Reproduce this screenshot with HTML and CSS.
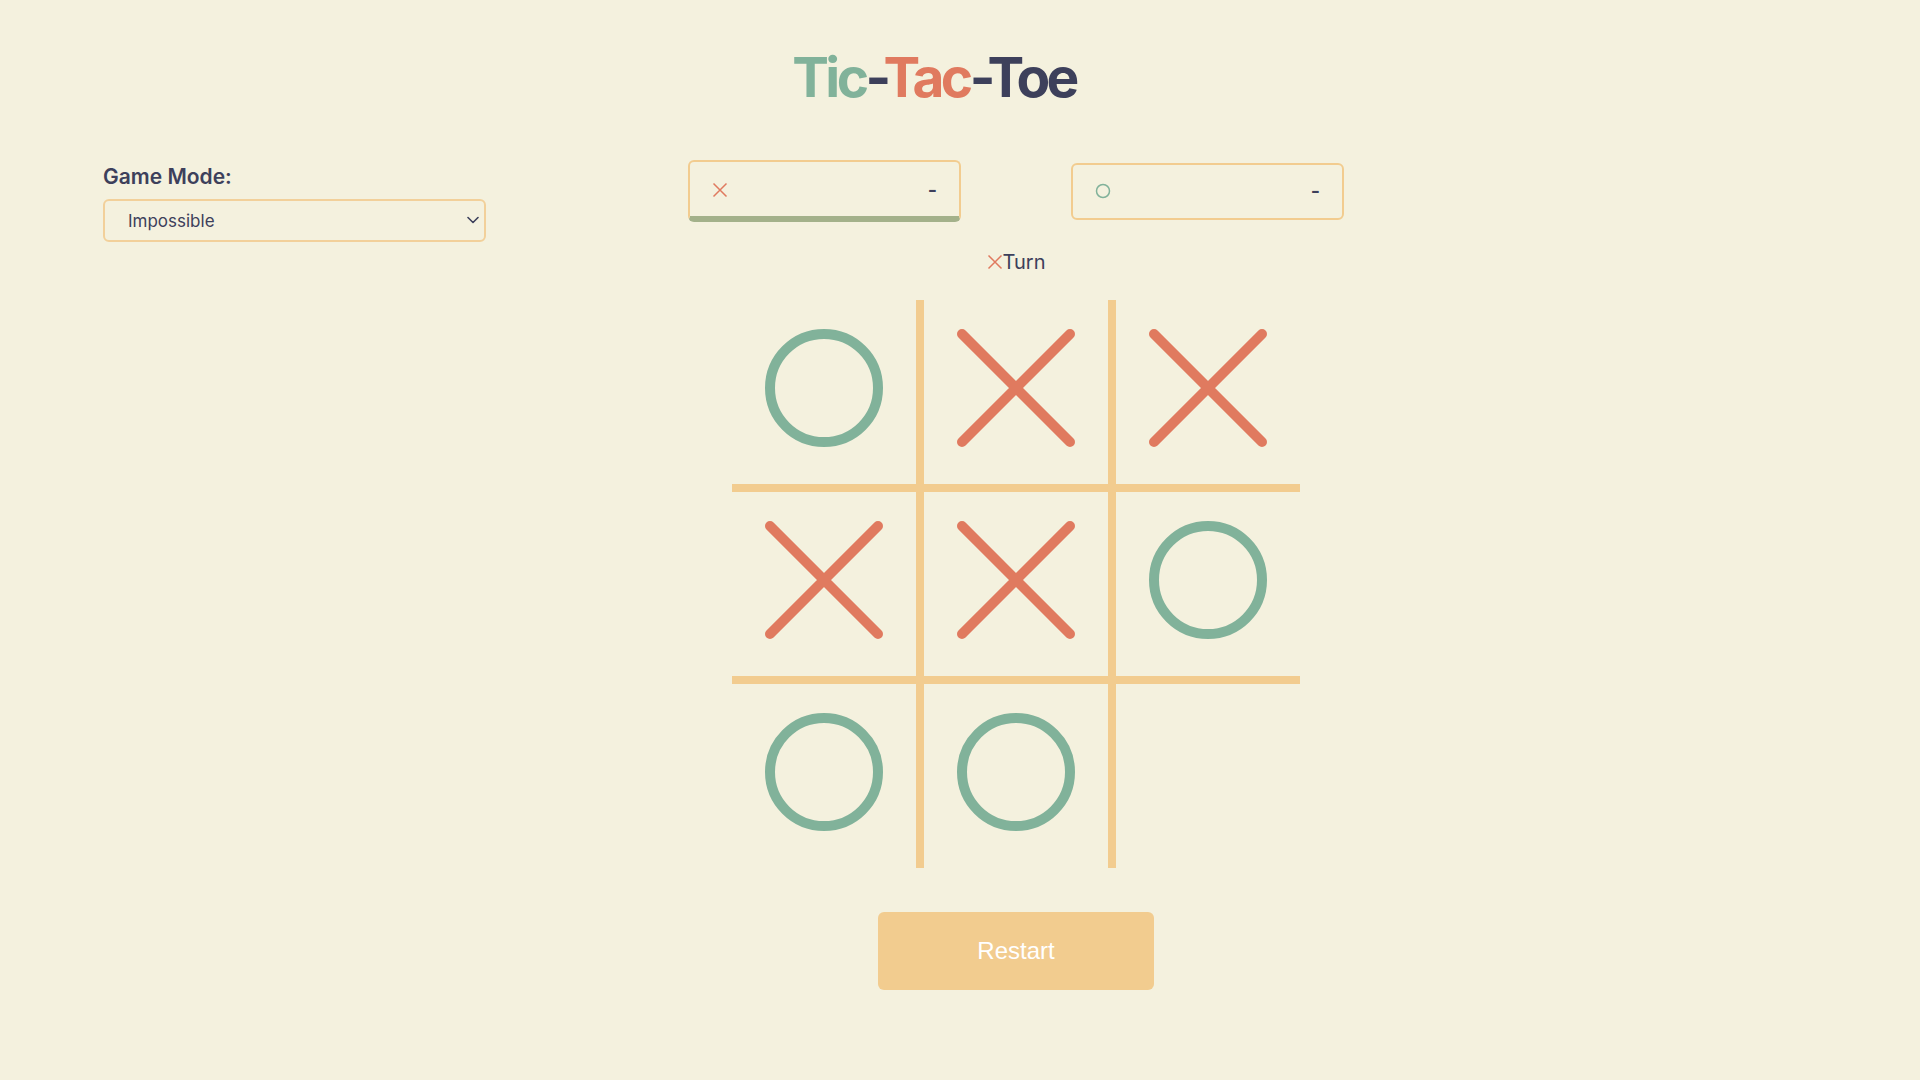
FILE: index.html
```html
<!DOCTYPE html>
<html lang="en">
<head>
<meta charset="utf-8">
<title>Tic-Tac-Toe</title>
<link rel="stylesheet" href="styles.css">
</head>
<body>
<div class="page">
  <h1 class="title"><span class="t-green">Tic</span><span class="t-navy">-</span><span class="t-coral">Tac</span><span class="t-navy">-Toe</span></h1>
  <div class="layout">
    <aside class="sidebar">
      <label class="mode-label" for="mode">Game Mode:</label>
      <div class="select-wrap">
        <select id="mode" class="mode-select">
          <option>Easy</option>
          <option>Medium</option>
          <option>Hard</option>
          <option selected>Impossible</option>
        </select>
        <svg class="chevron" viewBox="0 0 12 8" width="12" height="8"><path d="M1 1.5 L6 6.5 L11 1.5" fill="none" stroke="#3d405b" stroke-width="1.6" stroke-linecap="round" stroke-linejoin="round"/></svg>
      </div>
    </aside>
    <main class="game">
      <div class="players">
        <div class="player-card active">
          <svg class="icon" viewBox="0 0 16 16" width="16" height="16"><path d="M1.5 1.5 L14.5 14.5 M14.5 1.5 L1.5 14.5" stroke="#e07a5f" stroke-width="1.5" fill="none"/></svg>
          <span class="score">-</span>
        </div>
        <div class="player-card">
          <svg class="icon" viewBox="0 0 16 16" width="16" height="16"><circle cx="8" cy="8" r="6.5" stroke="#81b29a" stroke-width="1.5" fill="none"/></svg>
          <span class="score">-</span>
        </div>
      </div>
      <div class="turn">
        <svg class="turn-icon" viewBox="0 0 16 16" width="16" height="16"><path d="M1.5 1.5 L14.5 14.5 M14.5 1.5 L1.5 14.5" stroke="#e07a5f" stroke-width="1.5" fill="none"/></svg><span>Turn</span>
      </div>
      <div class="board">
        <div class="cell"><svg class="mark" viewBox="0 0 120 120"><circle cx="60" cy="60" r="54" class="o"/></svg></div>
        <div class="cell"><svg class="mark" viewBox="0 0 120 120"><path d="M6 6 L114 114 M114 6 L6 114" class="x"/></svg></div>
        <div class="cell"><svg class="mark" viewBox="0 0 120 120"><path d="M6 6 L114 114 M114 6 L6 114" class="x"/></svg></div>
        <div class="cell"><svg class="mark" viewBox="0 0 120 120"><path d="M6 6 L114 114 M114 6 L6 114" class="x"/></svg></div>
        <div class="cell"><svg class="mark" viewBox="0 0 120 120"><path d="M6 6 L114 114 M114 6 L6 114" class="x"/></svg></div>
        <div class="cell"><svg class="mark" viewBox="0 0 120 120"><circle cx="60" cy="60" r="54" class="o"/></svg></div>
        <div class="cell"><svg class="mark" viewBox="0 0 120 120"><circle cx="60" cy="60" r="54" class="o"/></svg></div>
        <div class="cell"><svg class="mark" viewBox="0 0 120 120"><circle cx="60" cy="60" r="54" class="o"/></svg></div>
        <div class="cell"></div>
      </div>
      <button class="restart" type="button">Restart</button>
    </main>
  </div>
</div>
</body>
</html>
```
FILE: styles.css
```css
* { box-sizing: border-box; }
html, body {
  margin: 0;
  padding: 0;
  background: #f4f1de;
}
body {
  width: 1920px;
  height: 1080px;
  overflow: hidden;
  font-family: Inter, "Noto Sans", "Liberation Sans", sans-serif;
  color: #3d405b;
}
.page {
  display: flex;
  flex-direction: column;
}
.title {
  margin: 0;
  padding: 50px 52px 0 0;
  font-size: 55px;
  line-height: 55px;
  font-weight: 700;
  letter-spacing: -0.065em;
  text-align: center;
}
.t-green { color: #81b29a; }
.t-coral { color: #e07a5f; }
.t-navy { color: #3d405b; }

.layout {
  display: grid;
  grid-template-columns: 383px 656px;
  column-gap: 202px;
  padding-left: 103px;
  margin-top: 55px;
}
.sidebar {
  padding-top: 4px;
  display: flex;
  flex-direction: column;
}
.mode-label {
  font-size: 21px;
  line-height: 25px;
  font-weight: 600;
  color: #3d405b;
  margin-bottom: 10px;
}
.select-wrap {
  position: relative;
  width: 383px;
  height: 43px;
}
.mode-select {
  appearance: none;
  -webkit-appearance: none;
  width: 100%;
  height: 100%;
  border: 2px solid #f2d09a;
  border-radius: 6px;
  background: transparent;
  padding: 0 40px 0 23px;
  font-family: Inter, "Liberation Sans", sans-serif;
  font-size: 17px;
  color: #3d405b;
  outline: none;
}
.chevron {
  position: absolute;
  right: 7px;
  top: 17px;
  pointer-events: none;
}

.game {
  display: flex;
  flex-direction: column;
}
.players {
  display: flex;
  justify-content: space-between;
  align-items: center;
  height: 62px;
}
.player-card {
  width: 273px;
  height: 57px;
  border: 2px solid #f2cc8f;
  border-radius: 6px;
  display: flex;
  align-items: center;
  justify-content: space-between;
  padding: 0 22px 0 22px;
}
.player-card.active {
  height: 62px;
  border-bottom: 6px solid #a3b18a;
  padding-top: 1px;
}
.icon { display: block; }
.score {
  font-size: 20px;
  font-weight: 600;
  line-height: 24px;
  color: #3d405b;
}
.turn {
  margin-top: 28px;
  height: 24px;
  display: flex;
  align-items: center;
  justify-content: center;
  font-size: 20px;
  line-height: 24px;
  color: #3d405b;
}
.turn-icon {
  display: block;
  margin-top: -1px;
}
.board {
  margin: 26px auto 0;
  width: 568px;
  height: 568px;
  display: grid;
  grid-template-columns: repeat(3, 184px);
  grid-template-rows: repeat(3, 184px);
  gap: 8px;
  background: #f2cc8f;
  border-radius: 4px;
}
.cell {
  background: #f4f1de;
  display: flex;
  align-items: center;
  justify-content: center;
  padding-bottom: 9px;
}
.mark {
  width: 120px;
  height: 120px;
  display: block;
}
.mark .o {
  fill: none;
  stroke: #81b29a;
  stroke-width: 10;
}
.mark .x {
  fill: none;
  stroke: #e07a5f;
  stroke-width: 10;
  stroke-linecap: round;
}
.restart {
  margin: 44px auto 0;
  width: 276px;
  height: 78px;
  border: none;
  border-radius: 6px;
  background: #f2cc8f;
  color: #ffffff;
  font-family: "Liberation Sans", Arial, sans-serif;
  font-size: 24px;
  cursor: pointer;
}
```
